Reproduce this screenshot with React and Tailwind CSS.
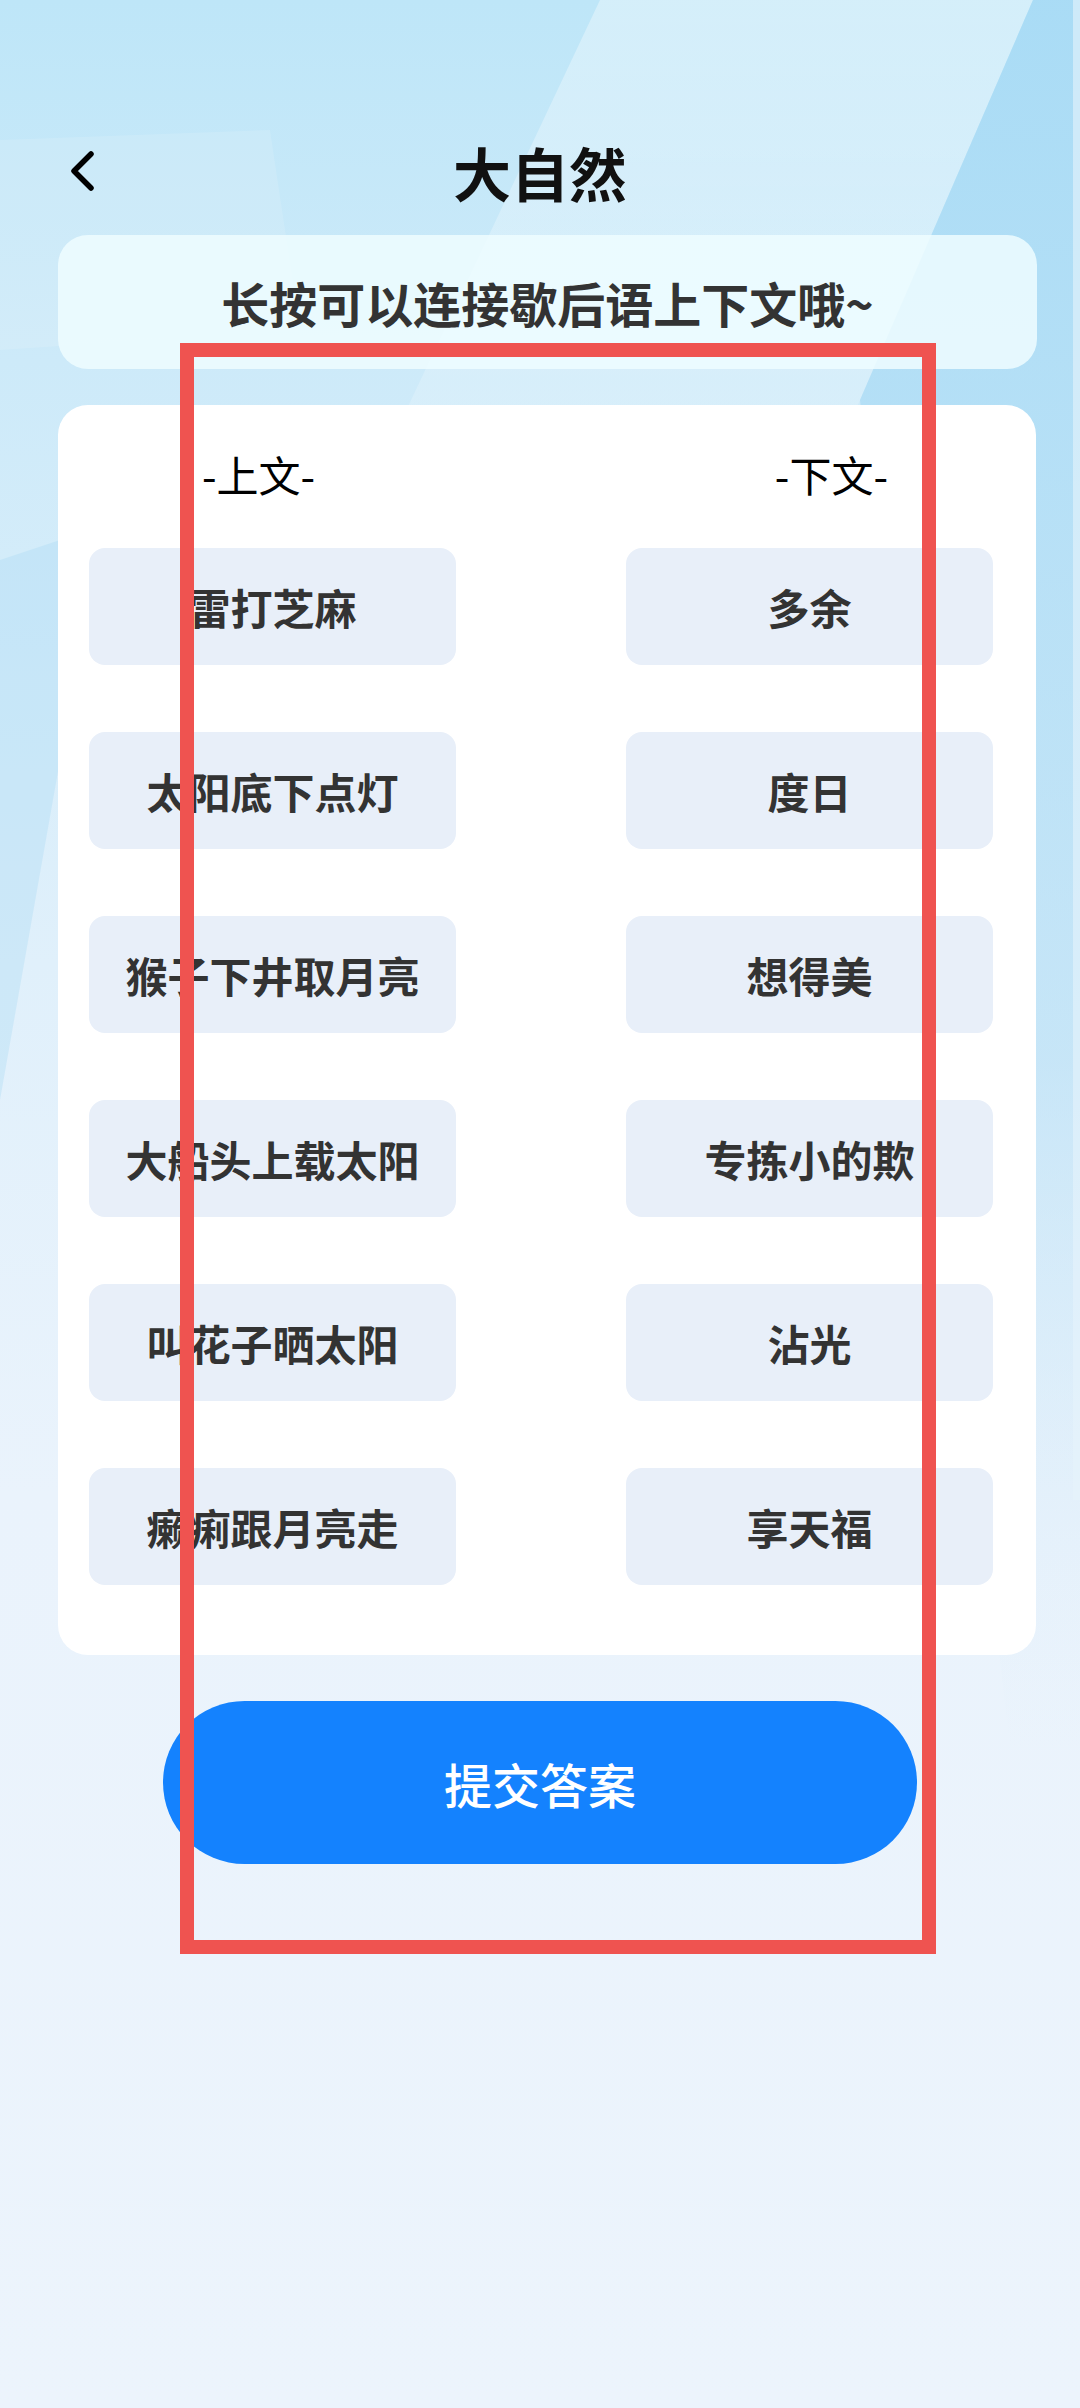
import React from 'react';

const left = ['雷打芝麻', '太阳底下点灯', '猴子下井取月亮', '大船头上载太阳', '叫花子晒太阳', '癞痢跟月亮走'];
const right = ['多余', '度日', '想得美', '专拣小的欺', '沾光', '享天福'];

function Backdrop() {
  return (
    <svg className="absolute inset-0 h-full w-full" viewBox="0 0 1080 2408" preserveAspectRatio="none">
      <defs>
        <linearGradient id="bg" x1="0" y1="0" x2="0" y2="1">
          <stop offset="0" stopColor="#bee6f8" />
          <stop offset="0.15" stopColor="#cdeaf9" />
          <stop offset="0.4" stopColor="#e0f0fb" />
          <stop offset="0.62" stopColor="#eaf3fc" />
          <stop offset="1" stopColor="#ecf4fc" />
        </linearGradient>
        <linearGradient id="side" x1="0" y1="0" x2="0" y2="1">
          <stop offset="0" stopColor="#a6daf5" stopOpacity="0.85" />
          <stop offset="0.6" stopColor="#b4def5" stopOpacity="0.6" />
          <stop offset="1" stopColor="#d8ebf8" stopOpacity="0" />
        </linearGradient>
        <linearGradient id="band" x1="0" y1="0" x2="0" y2="1">
          <stop offset="0" stopColor="#ffffff" stopOpacity="0.35" />
          <stop offset="1" stopColor="#ffffff" stopOpacity="0.05" />
        </linearGradient>
      </defs>
      <rect width="1080" height="2408" fill="url(#bg)" />
      <polygon points="600,0 1033,0 860,400 720,720 260,720" fill="url(#band)" />
      <polygon points="0,140 270,130 300,330 0,350" fill="#ffffff" opacity="0.12" />
      <polygon points="1033,0 1080,0 1080,1750 1010,1750 860,400" fill="url(#side)" />
      <polygon points="0,560 120,520 60,760 0,1100" fill="#aad9f3" opacity="0.35" />
      <rect x="1073" y="0" width="7" height="1500" fill="#e6f4fc" opacity="0.6" />
    </svg>
  );
}

function Item({ text }) {
  return (
    <div className="flex h-[117px] w-[367px] items-center justify-center rounded-[16px] bg-[#e8eff9] text-[42px] font-bold text-[#333]">
      {text}
    </div>
  );
}

export default function App() {
  return (
    <div className="relative min-h-[2408px] w-[1080px] overflow-hidden bg-[#ecf4fc] font-['Noto_Sans_CJK_SC','Noto_Sans',sans-serif]">
      <Backdrop />

      <div className="relative flex flex-col pt-[130px]">
        <div className="relative flex h-[84px] items-center justify-center">
          <svg className="absolute left-[66px] top-[19px]" width="32" height="44" viewBox="0 0 32 44">
            <path d="M25 5 L8 22 L25 39" fill="none" stroke="#000" strokeWidth="5.5" strokeLinecap="round" strokeLinejoin="round" />
          </svg>
          <h1 className="text-[58px] font-bold leading-none text-[#111]">大自然</h1>
        </div>

        <div className="ml-[58px] mr-[43px] mt-[21px] flex h-[134px] items-center justify-center rounded-[30px] bg-[#effdff]/85 text-[48px] font-bold text-[#333]">
          长按可以连接歇后语上下文哦~
        </div>

        <div className="ml-[58px] mr-[44px] mt-[36px] rounded-[30px] bg-white pb-[70px] pt-[47px]">
          <div className="flex h-[44px] items-center justify-between pl-[144px] pr-[148px] text-[42px] leading-none text-black">
            <span>-上文-</span>
            <span>-下文-</span>
          </div>
          <div className="mt-[52px] flex justify-between pl-[31px] pr-[43px]">
            <div className="flex flex-col gap-[67px]">
              {left.map((t) => (
                <Item key={t} text={t} />
              ))}
            </div>
            <div className="flex flex-col gap-[67px]">
              {right.map((t) => (
                <Item key={t} text={t} />
              ))}
            </div>
          </div>
        </div>

        <button className="ml-[163px] mt-[46px] flex h-[163px] w-[754px] items-center justify-center rounded-full bg-[#1482fe] text-[48px] font-medium text-white">
          提交答案
        </button>
      </div>

      <div className="pointer-events-none absolute left-[180px] top-[343px] h-[1611px] w-[756px] border-[14px] border-[#ef5350]" />
    </div>
  );
}
